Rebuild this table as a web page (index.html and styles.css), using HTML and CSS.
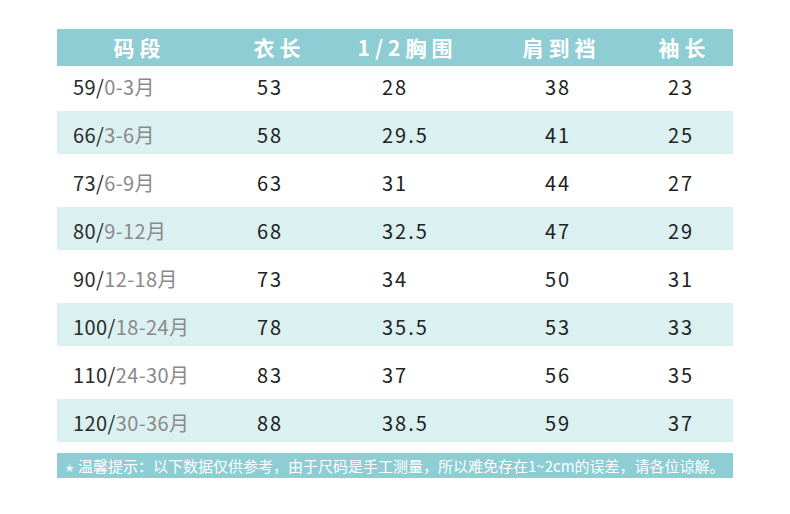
FILE: index.html
```html
<!DOCTYPE html>
<html lang="zh">
<head>
<meta charset="utf-8">
<link rel="stylesheet" href="styles.css">
</head>
<body>
<div class="sheet">
  <div class="head">
    <div>码段</div><div>衣长</div><div>1/2胸围</div><div>肩到裆</div><div>袖长</div>
  </div>
  <div class="row first"><div class="size">59/<span>0-3月</span></div><div>53</div><div>28</div><div>38</div><div>23</div></div>
  <div class="row alt"><div class="size">66/<span>3-6月</span></div><div>58</div><div>29.5</div><div>41</div><div>25</div></div>
  <div class="row"><div class="size">73/<span>6-9月</span></div><div>63</div><div>31</div><div>44</div><div>27</div></div>
  <div class="row alt"><div class="size">80/<span>9-12月</span></div><div>68</div><div>32.5</div><div>47</div><div>29</div></div>
  <div class="row"><div class="size">90/<span>12-18月</span></div><div>73</div><div>34</div><div>50</div><div>31</div></div>
  <div class="row alt"><div class="size">100/<span>18-24月</span></div><div>78</div><div>35.5</div><div>53</div><div>33</div></div>
  <div class="row"><div class="size">110/<span>24-30月</span></div><div>83</div><div>37</div><div>56</div><div>35</div></div>
  <div class="row alt"><div class="size">120/<span>30-36月</span></div><div>88</div><div>38.5</div><div>59</div><div>37</div></div>
  <div class="note"><span class="star">★</span>温馨提示：以下数据仅供参考，由于尺码是手工测量，所以难免存在1~2cm的误差，请各位谅解。</div>
</div>
</body>
</html>
```
FILE: styles.css
```css
html, body {
  margin: 0;
  padding: 0;
  background: #ffffff;
}
body {
  font-family: "Noto Sans CJK SC", "Noto Sans", sans-serif;
}
.sheet {
  margin: 29px 0 0 57px;
  width: 676px;
}
.head {
  display: grid;
  grid-template-columns: 160px 120px 136px 172px 74px;
  height: 37px;
  align-items: center;
  background: #8dcdd3;
  color: #ffffff;
  font-size: 21px;
  font-weight: bold;
  letter-spacing: 5px;
  text-align: center;
}
.head div {
  line-height: 37px;
  padding-left: 5px;
}
.row {
  display: grid;
  grid-template-columns: 200px 125px 163px 123px 1fr;
  align-items: center;
  height: 53px;
  box-sizing: border-box;
  padding-top: 5px;
  font-size: 20px;
  letter-spacing: 2px;
  color: #222222;
}
.row.first {
  height: 45px;
  padding-top: 0;
  padding-bottom: 4px;
}
.row.alt {
  height: 43px;
  background: #daf0f1;
}
.row div {
  line-height: 24px;
}
.size {
  padding-left: 16px;
  letter-spacing: 0.4px;
  color: #2a2a2a;
}
.size span {
  color: #8a8a8a;
}
.note {
  margin-top: 11px;
  height: 25px;
  line-height: 25px;
  background: #8dcdd3;
  color: #ffffff;
  font-size: 15px;
  padding-left: 8px;
  white-space: nowrap;
}
.star {
  font-size: 9px;
  color: #e8f6f7;
  margin-right: 4px;
  vertical-align: 1px;
}
```
